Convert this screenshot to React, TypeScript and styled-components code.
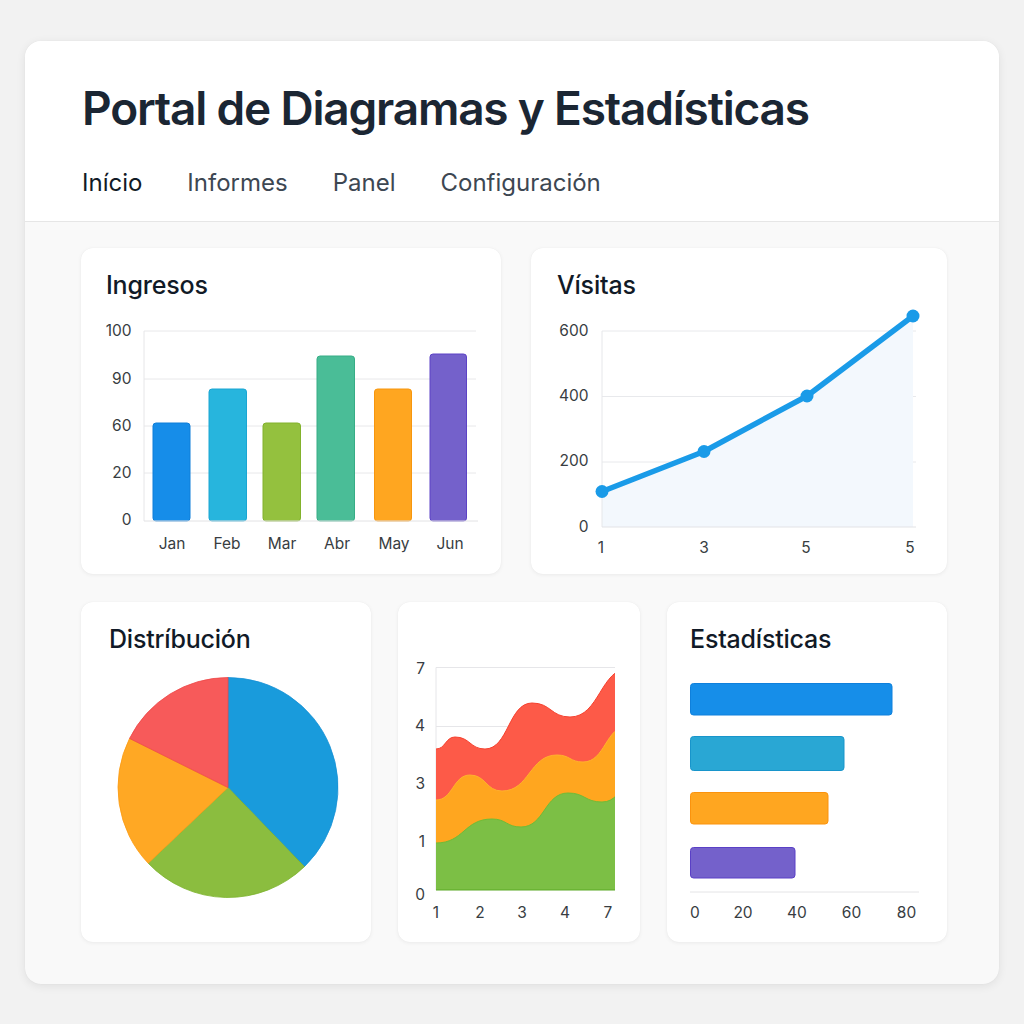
import React from "react";
import styled, { createGlobalStyle } from "styled-components";

const GlobalStyle = createGlobalStyle`
  html, body { margin: 0; padding: 0; }
  body {
    background: #f2f2f2;
    font-family: Inter, "Noto Sans", "Liberation Sans", sans-serif;
    color: #1b2633;
  }
`;

const Page = styled.div`
  padding: 41px 25px 40px;
`;

const Frame = styled.div`
  background: #f9f9f9;
  border-radius: 16px;
  box-shadow: 0 2px 10px rgba(0, 0, 0, 0.08), 0 0 1px rgba(0, 0, 0, 0.08);
  overflow: hidden;
  height: 943px;
  box-sizing: border-box;
`;

const Header = styled.header`
  background: #ffffff;
  border-bottom: 1px solid #e6e6e6;
  height: 181px;
  box-sizing: border-box;
  padding: 40px 57px 0;
`;

const Title = styled.h1`
  margin: 0;
  font-size: 46px;
  line-height: 54px;
  font-weight: 600;
  letter-spacing: -1.2px;
  color: #1b2633;
`;

const Nav = styled.nav`
  display: flex;
  gap: 45px;
  margin-top: 33px;
`;

const NavItem = styled.span<{ $active?: boolean }>`
  font-size: 24px;
  line-height: 30px;
  letter-spacing: 0;
  font-weight: 400;
  color: ${(p) => (p.$active ? "#111a26" : "#3d4752")};
`;

const Content = styled.main`
  padding: 26px 52px 0 56px;
  display: flex;
  flex-direction: column;
  gap: 28px;
`;

const Row = styled.div<{ $cols: string; $gap: number; $height: number }>`
  display: grid;
  grid-template-columns: ${(p) => p.$cols};
  column-gap: ${(p) => p.$gap}px;
  height: ${(p) => p.$height}px;
`;

const Card = styled.section`
  background: #ffffff;
  border-radius: 12px;
  box-shadow: 0 1px 4px rgba(0, 0, 0, 0.06), 0 0 1px rgba(0, 0, 0, 0.06);
  display: flex;
  flex-direction: column;
  overflow: hidden;
`;

const CardTitle = styled.h2<{ $indent: number }>`
  margin: 0;
  padding: 22px 0 0 ${(p) => p.$indent}px;
  font-size: 25px;
  line-height: 30px;
  font-weight: 500;
  letter-spacing: -0.2px;
  color: #111a27;
`;

const ChartSvg = styled.svg`
  display: block;
  flex: 1;
`;

const AxisLabel = styled.text`
  font-family: Inter, "Noto Sans", sans-serif;
  font-size: 15.5px;
  fill: #383d42;
  dominant-baseline: middle;
`;

const months = [
  { m: "Jan", x1: 153, x2: 190, top: 423, cx: 172, fill: "#168de9", stroke: "#0f7fd9" },
  { m: "Feb", x1: 209, x2: 246.5, top: 389, cx: 227, fill: "#27b5dd", stroke: "#1aa6d3" },
  { m: "Mar", x1: 263, x2: 300.5, top: 423, cx: 282, fill: "#94c13e", stroke: "#82b22c" },
  { m: "Abr", x1: 317, x2: 354.5, top: 356, cx: 337, fill: "#4abd97", stroke: "#37ad86" },
  { m: "May", x1: 374.5, x2: 411.5, top: 389, cx: 394, fill: "#ffa620", stroke: "#f7960e" },
  { m: "Jun", x1: 430, x2: 466.5, top: 354, cx: 450, fill: "#7461cb", stroke: "#5c42c6" },
];

const IngresosChart = () => (
  <ChartSvg width={420} height={274} viewBox="81 300 420 274">
    {[331, 379, 426, 473].map((y) => (
      <line key={y} x1={144} x2={476} y1={y} y2={y} stroke="#e8e8ea" strokeWidth={1} />
    ))}
    <line x1={144} x2={144} y1={331} y2={521} stroke="#e6e6e8" strokeWidth={1} />
    {[
      ["100", 331],
      ["90", 379],
      ["60", 426],
      ["20", 473],
      ["0", 520],
    ].map(([t, y]) => (
      <AxisLabel key={t} x={131.5} y={Number(y) + 1} textAnchor="end">
        {t}
      </AxisLabel>
    ))}
    {months.map((b) => (
      <rect
        key={b.m}
        x={b.x1}
        y={b.top}
        width={b.x2 - b.x1}
        height={521 - b.top}
        rx={3}
        fill={b.fill}
        stroke={b.stroke}
        strokeWidth={1}
      />
    ))}
    <line x1={144} x2={478} y1={521} y2={521} stroke="#e2e2e4" strokeWidth={1} />
    {months.map((b) => (
      <AxisLabel key={b.m + "l"} x={b.cx} y={545} textAnchor="middle">
        {b.m}
      </AxisLabel>
    ))}
  </ChartSvg>
);

const pts: [number, number][] = [
  [602, 491.5],
  [704, 451.5],
  [807, 396],
  [913, 316],
];

const VisitasChart = () => {
  const line = pts.map((p, i) => `${i ? "L" : "M"}${p[0]} ${p[1]}`).join(" ");
  const area = `${line} L913 527 L602 527 Z`;
  return (
    <ChartSvg width={416} height={274} viewBox="531 300 416 274">
      {[331, 396.5, 462].map((y) => (
        <line key={y} x1={602} x2={916} y1={y} y2={y} stroke="#e8e9ec" strokeWidth={1} />
      ))}
      <path d={area} fill="#f3f8fd" />
      <line x1={602} x2={602} y1={331} y2={527} stroke="#e6e7ea" strokeWidth={1} />
      <line x1={602} x2={916} y1={527} y2={527} stroke="#e2e3e6" strokeWidth={1} />
      {[
        ["600", 332],
        ["400", 397],
        ["200", 462],
        ["0", 528],
      ].map(([t, y]) => (
        <AxisLabel key={t} x={588.5} y={Number(y)} textAnchor="end">
          {t}
        </AxisLabel>
      ))}
      <path d={line} fill="none" stroke="#1a9be8" strokeWidth={5.5} strokeLinejoin="round" strokeLinecap="round" />
      {pts.map((p) => (
        <circle key={p[0]} cx={p[0]} cy={p[1]} r={6.5} fill="#1a9be8" />
      ))}
      {[
        ["1", 601],
        ["3", 704],
        ["5", 806],
        ["5", 910],
      ].map(([t, x], i) => (
        <AxisLabel key={i} x={Number(x)} y={549} textAnchor="middle">
          {t}
        </AxisLabel>
      ))}
    </ChartSvg>
  );
};

const polar = (cx: number, cy: number, r: number, deg: number) => {
  const a = (deg * Math.PI) / 180;
  return [cx + r * Math.sin(a), cy - r * Math.cos(a)];
};

const slice = (cx: number, cy: number, r: number, a0: number, a1: number) => {
  const [x0, y0] = polar(cx, cy, r, a0);
  const [x1, y1] = polar(cx, cy, r, a1);
  const large = a1 - a0 > 180 ? 1 : 0;
  return `M${cx} ${cy} L${x0} ${y0} A${r} ${r} 0 ${large} 1 ${x1} ${y1} Z`;
};

const pieSlices = [
  { a0: 0, a1: 136, fill: "#199bdc", stroke: "#1790d6" },
  { a0: 136, a1: 226.5, fill: "#8bbd3f", stroke: "#7cb32d" },
  { a0: 226.5, a1: 296.5, fill: "#ffa824", stroke: "#fb9a12" },
  { a0: 296.5, a1: 360, fill: "#f75a5a", stroke: "#ee4848" },
];

const PieChart = () => (
  <ChartSvg width={290} height={288} viewBox="81 654 290 288">
    {pieSlices.map((s) => (
      <path key={s.a0} d={slice(228, 787.5, 110, s.a0, s.a1)} fill={s.fill} stroke={s.stroke} strokeWidth={0.8} />
    ))}
  </ChartSvg>
);

const smooth = (p: [number, number][]) => {
  let d = `M${p[0][0]} ${p[0][1]}`;
  for (let i = 1; i < p.length; i++) {
    const [x0, y0] = p[i - 1];
    const [x1, y1] = p[i];
    const h = (x1 - x0) / 2;
    d += ` C${x0 + h} ${y0} ${x1 - h} ${y1} ${x1} ${y1}`;
  }
  return d;
};

const redTop: [number, number][] = [
  [436, 749],
  [455, 737],
  [485, 749],
  [532, 703],
  [570, 717],
  [630, 668],
];
const orangeTop: [number, number][] = [
  [436, 800],
  [470, 775],
  [502, 791],
  [557, 755],
  [583, 762],
  [628, 726],
];
const greenTop: [number, number][] = [
  [436, 843],
  [492, 819],
  [521, 827],
  [568, 793],
  [602, 802],
  [630, 790],
];

const areaPath = (p: [number, number][]) => {
  const last = p[p.length - 1];
  return `${smooth(p)} L${last[0]} 890 L${p[0][0]} 890 Z`;
};

const AreaChart = () => (
  <ChartSvg width={242} height={340} viewBox="398 602 242 340">
    <defs>
      <clipPath id="plotClip">
        <rect x={436} y={660} width={179} height={231} />
      </clipPath>
    </defs>
    <line x1={436} x2={615} y1={667.5} y2={667.5} stroke="#e6e6e9" strokeWidth={1} />
    <line x1={436} x2={615} y1={726.5} y2={726.5} stroke="#e6e6e9" strokeWidth={1} />
    <line x1={436} x2={436} y1={667.5} y2={890} stroke="#e6e6e9" strokeWidth={1} />
    <g clipPath="url(#plotClip)">
      <path d={areaPath(redTop)} fill="#fd5a48" />
      <path d={smooth(redTop)} fill="none" stroke="#f5412f" strokeWidth={1} />
      <path d={areaPath(orangeTop)} fill="#ffa61f" />
      <path d={smooth(orangeTop)} fill="none" stroke="#ffb12e" strokeWidth={1} />
      <path d={areaPath(greenTop)} fill="#7cbf45" />
      <path d={smooth(greenTop)} fill="none" stroke="#6fbb38" strokeWidth={1} />
    </g>
    <line x1={436} x2={615} y1={890} y2={890} stroke="#5aa824" strokeWidth={1} />
    {[
      ["7", 670],
      ["4", 727],
      ["3", 785],
      ["1", 843],
      ["0", 896],
    ].map(([t, y]) => (
      <AxisLabel key={t} x={425} y={Number(y)} textAnchor="end">
        {t}
      </AxisLabel>
    ))}
    {[
      ["1", 436],
      ["2", 480],
      ["3", 522],
      ["4", 565],
      ["7", 608],
    ].map(([t, x], i) => (
      <AxisLabel key={i} x={Number(x)} y={914} textAnchor="middle">
        {t}
      </AxisLabel>
    ))}
  </ChartSvg>
);

const statBars = [
  { y: 683.5, h: 31.5, w: 201.5, fill: "#168ee9", stroke: "#0f80dc" },
  { y: 736.5, h: 34, w: 153.5, fill: "#29a7d4", stroke: "#1895cb" },
  { y: 792.5, h: 31.5, w: 137.5, fill: "#ffa620", stroke: "#fb930d" },
  { y: 847.5, h: 30.5, w: 104.5, fill: "#7461cb", stroke: "#5a40c6" },
];

const StatsChart = () => (
  <ChartSvg width={280} height={288} viewBox="667 654 280 288">
    {statBars.map((b) => (
      <rect key={b.y} x={690.5} y={b.y} width={b.w} height={b.h} rx={3} fill={b.fill} stroke={b.stroke} strokeWidth={1} />
    ))}
    <line x1={690} x2={919} y1={892} y2={892} stroke="#e4e4e6" strokeWidth={1} />
    {[
      ["0", 695],
      ["20", 743],
      ["40", 797],
      ["60", 851.5],
      ["80", 906.5],
    ].map(([t, x]) => (
      <AxisLabel key={t} x={Number(x)} y={914} textAnchor="middle">
        {t}
      </AxisLabel>
    ))}
  </ChartSvg>
);

export default function App() {
  return (
    <>
      <GlobalStyle />
      <Page>
        <Frame>
          <Header>
            <Title>Portal de Diagramas y Estadísticas</Title>
            <Nav>
              <NavItem $active>Início</NavItem>
              <NavItem>Informes</NavItem>
              <NavItem>Panel</NavItem>
              <NavItem>Configuración</NavItem>
            </Nav>
          </Header>
          <Content>
            <Row $cols="420px 416px" $gap={30} $height={326}>
              <Card>
                <CardTitle $indent={25}>Ingresos</CardTitle>
                <IngresosChart />
              </Card>
              <Card>
                <CardTitle $indent={26}>Vísitas</CardTitle>
                <VisitasChart />
              </Card>
            </Row>
            <Row $cols="290px 242px 280px" $gap={27} $height={340}>
              <Card>
                <CardTitle $indent={28}>Distríbución</CardTitle>
                <PieChart />
              </Card>
              <Card>
                <AreaChart />
              </Card>
              <Card>
                <CardTitle $indent={23}>Estadísticas</CardTitle>
                <StatsChart />
              </Card>
            </Row>
          </Content>
        </Frame>
      </Page>
    </>
  );
}
